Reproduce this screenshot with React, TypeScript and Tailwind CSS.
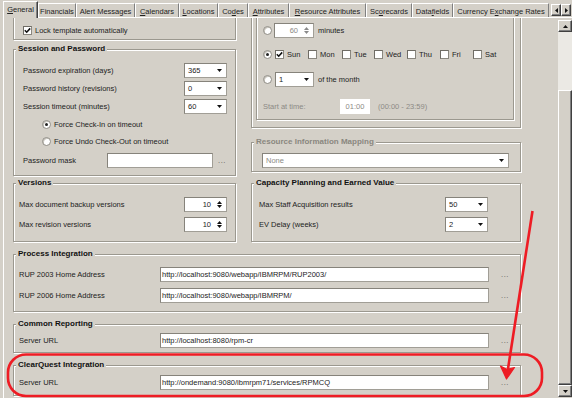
import type { ReactNode } from "react";

const etched = "border border-[#9b988f] shadow-[inset_1px_1px_0_#fff,1px_1px_0_#fff]";
const field = "border border-[#a19e96] border-t-[#86837b] border-l-[#86837b] bg-white";
const raised =
  "border border-t-white border-l-white border-r-[#404040] border-b-[#404040] bg-[#d4d0c8] shadow-[inset_-1px_-1px_0_#808080]";

const tabs = [
  { label: "Financials", u: -1, w: "w-[38px]" },
  { label: "Alert Messages", u: -1, w: "w-[59px]" },
  { label: "Calendars", u: 0, w: "w-[44px]" },
  { label: "Locations", u: 0, w: "w-[39px]" },
  { label: "Codes", u: 2, w: "w-[30px]" },
  { label: "Attributes", u: 0, w: "w-[41px]" },
  { label: "Resource Attributes", u: 0, w: "w-[77px]" },
  { label: "Scorecards", u: 2, w: "w-[46px]" },
  { label: "Datafields", u: 4, w: "w-[41px]" },
  { label: "Currency Exchange Rates", u: 10, w: "w-[96px]" },
];

const days = [
  { d: "Sun", on: true, w: "w-[33px]" },
  { d: "Mon", on: false, w: "w-[34px]" },
  { d: "Tue", on: false, w: "w-[32px]" },
  { d: "Wed", on: false, w: "w-[33px]" },
  { d: "Thu", on: false, w: "w-[33px]" },
  { d: "Fri", on: false, w: "w-[33px]" },
  { d: "Sat", on: false, w: "w-[33px]" },
];

function Mnemonic({ text, u }: { text: string; u: number }) {
  if (u < 0) return <>{text}</>;
  return (
    <>
      {text.slice(0, u)}
      <span className="underline underline-offset-1">{text[u]}</span>
      {text.slice(u + 1)}
    </>
  );
}

function Group({ title, muted, className, children }: { title?: string; muted?: boolean; className?: string; children?: ReactNode }) {
  return (
    <div className={`relative ${etched} ${className ?? ""}`}>
      {title && (
        <span
          className={`absolute -top-[6px] left-[2px] bg-[#d4d0c8] px-[2px] text-[8px] font-bold leading-[10px] ${
            muted ? "text-[#8a877f]" : "text-[#111]"
          }`}
        >
          {title}
        </span>
      )}
      {children}
    </div>
  );
}

function Tri({ up, muted }: { up?: boolean; muted?: boolean }) {
  return (
    <svg viewBox="0 0 5 3" className="block h-[3px] w-[5px]">
      <path d={up ? "M0 3h5L2.5 0z" : "M0 0h5L2.5 3z"} fill={muted ? "#8a8a8a" : "#111"} />
    </svg>
  );
}

function Check({ on }: { on?: boolean }) {
  return (
    <span className="flex h-[9px] w-[9px] shrink-0 items-center justify-center border border-[#8a877f] border-t-[#6f6c65] border-l-[#6f6c65] bg-white">
      {on && (
        <svg viewBox="0 0 7 7" className="h-[7px] w-[7px]">
          <path d="M0.8 3.3 L2.7 5.2 L6.2 1.4" stroke="#111" strokeWidth="1.6" fill="none" />
        </svg>
      )}
    </span>
  );
}

function Radio({ on }: { on?: boolean }) {
  return (
    <span className="flex h-[9px] w-[9px] shrink-0 items-center justify-center rounded-full border border-[#8f8c84] bg-white shadow-[inset_1px_1px_0_#c9c6be]">
      {on && <span className="h-[3px] w-[3px] rounded-full bg-[#222]" />}
    </span>
  );
}

function Combo({ value, className, muted }: { value: string; className: string; muted?: boolean }) {
  return (
    <div className={`flex h-[15px] shrink-0 items-center justify-between pl-[3px] pr-[4px] ${field} ${className}`}>
      <span className={muted ? "text-[#8c8a85]" : "text-[#222]"}>{value}</span>
      <Tri />
    </div>
  );
}

function Spin({ value, className, muted }: { value: string; className: string; muted?: boolean }) {
  return (
    <div className={`flex h-[15px] shrink-0 items-center justify-end pr-[4px] ${field} ${className}`}>
      <span className={muted ? "text-[#8c8a85]" : "text-[#222]"}>{value}</span>
      <span className="ml-[6px] flex flex-col gap-[1px]">
        <Tri up muted={muted} />
        <Tri muted={muted} />
      </span>
    </div>
  );
}

function TextBox({ value, className }: { value?: string; className: string }) {
  return <div className={`flex h-[15px] shrink-0 items-center pl-[1px] ${field} ${className}`}>{value}</div>;
}

function Dots({ className }: { className?: string }) {
  return <span className={`tracking-[0.6px] text-[#555] ${className ?? ""}`}>...</span>;
}

function UrlRow({ label, value, className }: { label: string; value: string; className?: string }) {
  return (
    <div className={`flex h-[15px] items-center ${className ?? ""}`}>
      <span className="w-[141px] shrink-0">{label}</span>
      <TextBox value={value} className="w-[329px]" />
      <Dots className="ml-[12px]" />
    </div>
  );
}

function TabBar() {
  return (
    <div className="flex h-[17px] items-end">
      <div className="relative z-10 -mb-px flex h-[17px] w-[35px] items-center justify-center border-l border-t border-r border-l-white border-t-white border-r-[#404040] bg-[#d4d0c8] pb-[1px] shadow-[inset_-1px_0_0_#808080]">
        <Mnemonic text="General" u={0} />
      </div>
      {tabs.map((t) => (
        <div
          key={t.label}
          className={`flex h-[14px] shrink-0 items-center justify-center border-l border-t border-r border-l-white border-t-white border-r-[#808080] pt-[1px] ${t.w}`}
        >
          <span className="whitespace-nowrap">
            <Mnemonic text={t.label} u={t.u} />
          </span>
        </div>
      ))}
      <div className="mb-[1px] ml-[2px] flex">
        <span className={`flex h-[12px] w-[10px] items-center justify-center ${raised}`}>
          <svg viewBox="0 0 3 5" className="h-[5px] w-[3px]">
            <path d="M3 0v5L0 2.5z" fill="#111" />
          </svg>
        </span>
        <span className={`flex h-[12px] w-[10px] items-center justify-center ${raised}`}>
          <svg viewBox="0 0 3 5" className="h-[5px] w-[3px]">
            <path d="M0 0v5l3-2.5z" fill="#111" />
          </svg>
        </span>
      </div>
    </div>
  );
}

function ScrollBar() {
  return (
    <div className="mb-[1px] mt-[2px] flex w-[14px] shrink-0 flex-col">
      <span className={`flex h-[12px] items-center justify-center ${raised}`}>
        <Tri up />
      </span>
      <div className="h-[58px] bg-[#ebe9e4]" />
      <div className={`flex-1 ${raised}`} />
      <span className={`flex h-[12px] items-center justify-center ${raised}`}>
        <Tri />
      </span>
    </div>
  );
}

function Annotation() {
  return (
    <svg className="pointer-events-none absolute inset-0 h-[398px] w-[572px]" viewBox="0 0 572 398">
      <rect x="8" y="354.5" width="534" height="41.5" rx="18" fill="none" stroke="#ee1c24" strokeWidth="2.6" />
      <line x1="532.5" y1="211" x2="507.5" y2="372" stroke="#ee1c24" strokeWidth="2.6" />
      <path d="M506.5 379 L500.5 366 L507 369.5 L514.5 367.5 Z" fill="#ee1c24" stroke="#ee1c24" strokeWidth="1.2" strokeLinejoin="round" />
    </svg>
  );
}

export default function App() {
  return (
    <div className="relative flex h-[398px] w-[572px] flex-col overflow-hidden bg-[#d4d0c8] pl-[3px] font-['Liberation_Sans',Arial,sans-serif] text-[7.5px] leading-[9px] text-[#222]">
      <TabBar />
      <div className="flex h-[381px] border-l border-t border-white">
        <div className="h-full flex-1 overflow-hidden">
          <div className="-mt-[18px] pl-[9px]">
            <div className="flex items-start gap-[15px]">
              <div className="w-[223px] shrink-0">
                <Group className="mt-[8px] h-[32px] pl-[9px] pt-[17px]">
                  <div className="flex items-center gap-[3px]">
                    <Check on />
                    <span>Lock template automatically</span>
                  </div>
                </Group>
                <Group title="Session and Password" className="mt-[9px] h-[127px] pl-[9px] pt-[13px]">
                  <div className="flex h-[15px] items-center">
                    <span className="w-[161px] shrink-0">Password expiration (days)</span>
                    <Combo value="365" className="w-[43px]" />
                  </div>
                  <div className="mt-[3px] flex h-[15px] items-center">
                    <span className="w-[161px] shrink-0">Password history (revisions)</span>
                    <Combo value="0" className="w-[43px]" />
                  </div>
                  <div className="mt-[3px] flex h-[15px] items-center">
                    <span className="w-[161px] shrink-0">Session timeout (minutes)</span>
                    <Combo value="60" className="w-[43px]" />
                  </div>
                  <div className="mt-[3px] flex h-[15px] items-center gap-[3px] pl-[19px]">
                    <Radio on />
                    <span>Force Check-In on timeout</span>
                  </div>
                  <div className="mt-[2px] flex h-[15px] items-center gap-[3px] pl-[19px]">
                    <Radio />
                    <span>Force Undo Check-Out on timeout</span>
                  </div>
                  <div className="mt-[4px] flex h-[15px] items-center">
                    <span className="w-[84px] shrink-0">Password mask</span>
                    <TextBox className="w-[106px]" />
                    <Dots className="ml-[5px]" />
                  </div>
                </Group>
              </div>

              <div className="w-[270px] shrink-0">
                <Group className="mt-[8px] pb-[7px] pl-[4px] pr-[6px] pt-[2px]">
                  <div className={`${etched} pb-[5px]`}>
                    <div className="mt-[11px] flex h-[15px] items-center gap-[2px] pl-[6px]">
                      <Radio />
                      <Spin value="60" muted className="w-[40px]" />
                      <span className="ml-[2px]">minutes</span>
                    </div>
                    <div className="mt-[9px] flex h-[15px] items-center pl-[6px]">
                      <Radio on />
                      <div className="ml-[3px] flex">
                        {days.map((d) => (
                          <span key={d.d} className={`flex items-center gap-[3px] ${d.w}`}>
                            <Check on={d.on} />
                            <span>{d.d}</span>
                          </span>
                        ))}
                      </div>
                    </div>
                    <div className="mt-[10px] flex h-[15px] items-center pl-[6px]">
                      <Radio />
                      <Combo value="1" className="ml-[3px] w-[39px]" />
                      <span className="ml-[4px]">of the month</span>
                    </div>
                    <div className="mt-[12px] flex h-[15px] items-center pl-[6px] text-[#8c8a85]">
                      <span className="w-[77px] shrink-0">Start at time:</span>
                      <span className="flex h-[15px] w-[30px] items-center justify-center bg-white">01:00</span>
                      <span className="ml-[8px]">(00:00 - 23:59)</span>
                    </div>
                  </div>
                </Group>
                <Group title="Resource Information Mapping" muted className="mt-[14px] pb-[3px] pl-[10px] pr-[11px] pt-[10px]">
                  <Combo value="None" muted className="h-[14px] w-[247px]" />
                </Group>
              </div>
            </div>

            <div className="mt-[7px] flex items-start gap-[15px]">
              <Group title="Versions" className="h-[59px] w-[223px] shrink-0 pl-[5px] pt-[13px]">
                <div className="flex h-[15px] items-center">
                  <span className="w-[165px] shrink-0">Max document backup versions</span>
                  <Spin value="10" className="w-[43px]" />
                </div>
                <div className="mt-[5px] flex h-[15px] items-center">
                  <span className="w-[165px] shrink-0">Max revision versions</span>
                  <Spin value="10" className="w-[43px]" />
                </div>
              </Group>
              <Group title="Capacity Planning and Earned Value" className="h-[59px] w-[270px] shrink-0 pl-[7px] pt-[13px]">
                <div className="flex h-[15px] items-center">
                  <span className="w-[186px] shrink-0">Max Staff Acquisition results</span>
                  <Combo value="50" className="w-[43px]" />
                </div>
                <div className="mt-[5px] flex h-[15px] items-center">
                  <span className="w-[186px] shrink-0">EV Delay (weeks)</span>
                  <Combo value="2" className="w-[43px]" />
                </div>
              </Group>
            </div>

            <Group title="Process Integration" className="mt-[12px] h-[58px] w-[508px] pl-[5px] pt-[12px]">
              <UrlRow label="RUP 2003 Home Address" value="http://localhost:9080/webapp/IBMRPM/RUP2003/" />
              <UrlRow label="RUP 2006 Home Address" value="http://localhost:9080/webapp/IBMRPM/" className="mt-[6px]" />
            </Group>
            <Group title="Common Reporting" className="mt-[12px] h-[29px] w-[508px] pl-[5px] pt-[8px]">
              <UrlRow label="Server URL" value="http://localhost:8080/rpm-cr" />
            </Group>
            <Group title="ClearQuest Integration" className="mt-[12px] h-[31px] w-[508px] pl-[5px] pt-[9px]">
              <UrlRow label="Server URL" value="http://ondemand:9080/ibmrpm71/services/RPMCQ" />
            </Group>
          </div>
        </div>
        <ScrollBar />
      </div>
      <Annotation />
    </div>
  );
}
